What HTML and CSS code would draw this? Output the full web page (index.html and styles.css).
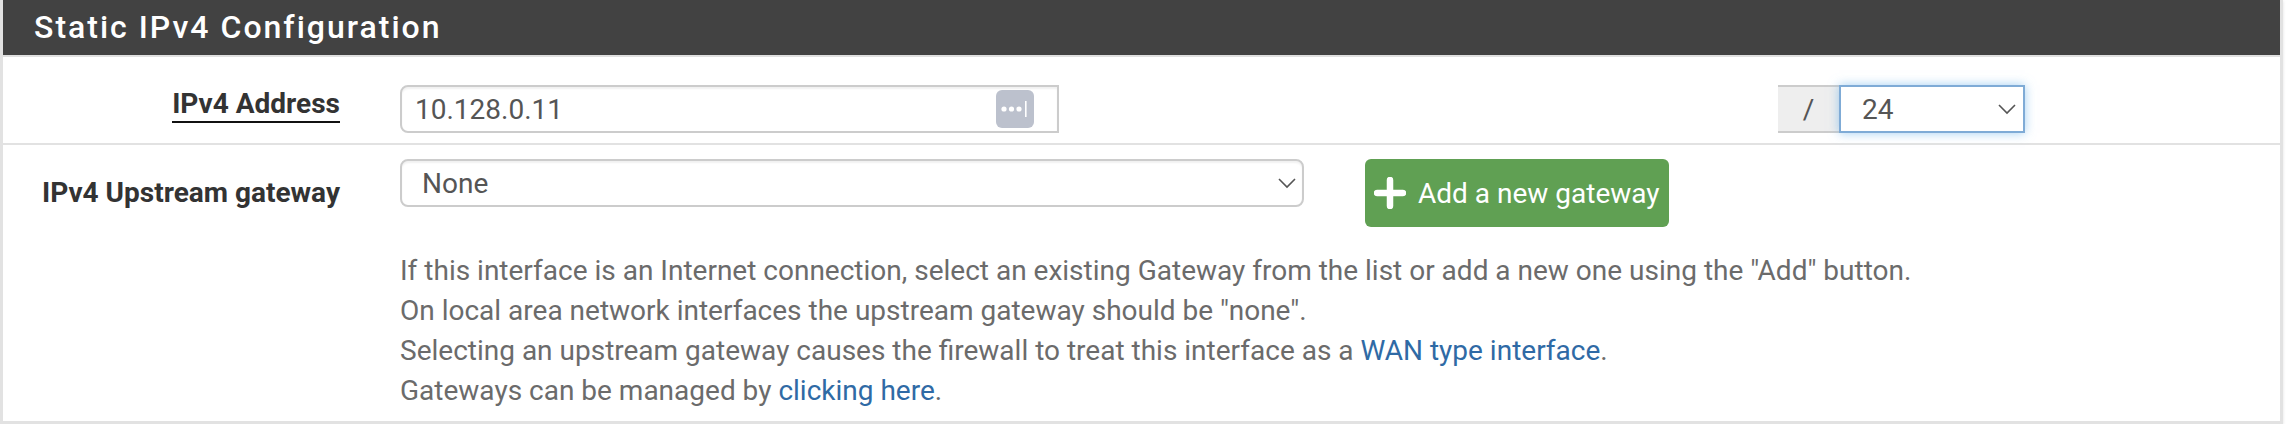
FILE: index.html
```html
<!DOCTYPE html>
<html lang="en">
<head>
  <meta charset="UTF-8">
  <title>Static IPv4 Configuration</title>
  <link rel="stylesheet" href="styles.css">
</head>
<body>

  <div class="panel">
    <h2 class="panel-title">Static IPv4 Configuration</h2>

    <div class="row row-address">
      <div class="label"><span class="label-link">IPv4 Address</span></div>
      <div class="field">
        <div class="control control-address">
          10.128.0.11
          <span class="pw-icon">
            <svg width="38" height="38" viewBox="0 0 38 38">
              <rect width="38" height="38" rx="6" fill="#bcc1cd"/>
              <circle cx="8" cy="19" r="2.6" fill="#fff"/>
              <circle cx="15.5" cy="19" r="2.6" fill="#fff"/>
              <circle cx="23" cy="19" r="2.6" fill="#fff"/>
              <rect x="29" y="11" width="1.6" height="16" fill="#fff"/>
            </svg>
          </span>
        </div>
        <div class="cidr">
          <span class="addon">/</span>
          <div class="control control-cidr">
            24
            <svg class="chevron" width="20" height="12" viewBox="0 0 20 12"><path d="M2 2l8 8 8-8" fill="none" stroke="#555" stroke-width="1.6"/></svg>
          </div>
        </div>
      </div>
    </div>

    <div class="row row-gateway">
      <div class="label">IPv4 Upstream gateway</div>
      <div class="field-stack">
        <div class="gateway-controls">
          <div class="control control-gateway">
            None
            <svg class="chevron" width="20" height="12" viewBox="0 0 20 12"><path d="M2 2l8 8 8-8" fill="none" stroke="#555" stroke-width="1.6"/></svg>
          </div>
          <div class="btn">
            <svg width="32" height="32" viewBox="0 0 32 32"><path d="M16 3v26M3 16h26" stroke="#fff" stroke-width="6.5" stroke-linecap="round"/></svg>
            Add a new gateway
          </div>
        </div>
        <p class="help">
          If this interface is an Internet connection, select an existing Gateway from the list or add a new one using the "Add" button.<br>
          On local area network interfaces the upstream gateway should be "none".<br>
          Selecting an upstream gateway causes the firewall to treat this interface as a <a href="#">WAN type interface</a>.<br>
          Gateways can be managed by <a href="#">clicking here</a>.
        </p>
      </div>
    </div>
  </div>

</body>
</html>
```

FILE: styles.css
```css
body {
  font-family: Roboto, "Liberation Sans", sans-serif;
  background: #fff;
  margin: 0;
  font-size: 28px;
  color: #555;
  overflow: hidden;
}
a {
  color: #2f6aa5;
  text-decoration: none;
}
.panel {
  width: 2277px;
  height: 421px;
  border: 3px solid #e2e2e2;
  border-top: none;
  box-shadow: 0 1px 3px rgba(0,0,0,0.12);
}
.panel-title {
  margin: 0;
  height: 55px;
  line-height: 55px;
  padding-left: 31px;
  background: #424242;
  color: #fff;
  font-size: 32px;
  font-weight: 500;
  letter-spacing: 2px;
  border-bottom: 2px solid #e0e0e0;
}
.row {
  display: flex;
}
.row-address {
  height: 88px;
  box-sizing: border-box;
  padding-top: 28px;
  align-items: flex-start;
  border-bottom: 2px solid #e2e2e2;
}
.label {
  width: 337px;
  text-align: right;
  font-weight: 700;
  color: #333;
  flex-shrink: 0;
}
.label-link {
  display: inline-block;
  line-height: 35px;
  padding-top: 1px;
  border-bottom: 2px solid #111;
}
.row-gateway .label {
  margin-top: 31px;
}
.field {
  display: flex;
  justify-content: space-between;
  width: 1625px;
  margin-left: 60px;
}
.field-stack {
  margin-left: 60px;
  padding-top: 14px;
}
.control {
  height: 48px;
  box-sizing: border-box;
  display: flex;
  align-items: center;
  justify-content: space-between;
  border: 2px solid #ccc;
  background: #fff;
  box-shadow: inset 0 2px 2px rgba(0,0,0,0.06);
}
.control-address {
  width: 659px;
  padding: 0 15px 0 13px;
  border-radius: 8px 0 0 8px;
}
.pw-icon {
  display: flex;
  margin-right: 8px;
}
.cidr {
  display: flex;
}
.addon {
  width: 61px;
  height: 48px;
  line-height: 46px;
  box-sizing: border-box;
  text-align: center;
  background: #eee;
  border-top: 2px solid #ccc;
  border-bottom: 2px solid #ccc;
}
.control-cidr {
  width: 186px;
  padding: 0 6px 0 21px;
  border-color: #7fabd6;
  box-shadow: 0 0 10px rgba(102,175,233,0.6);
}
.gateway-controls {
  display: flex;
  align-items: flex-start;
  gap: 61px;
}
.control-gateway {
  width: 904px;
  padding: 0 5px 0 20px;
  border-radius: 8px;
}
.btn {
  display: flex;
  align-items: center;
  gap: 12px;
  width: 304px;
  height: 68px;
  box-sizing: border-box;
  padding-left: 9px;
  background: #60a053;
  color: #fff;
  border-radius: 6px;
}
.help {
  margin: 24px 0 0;
  line-height: 40px;
  color: #6b6b6b;
}
```
